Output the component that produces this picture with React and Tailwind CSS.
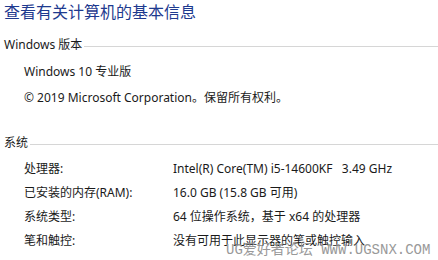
import React from 'react';

const font = { fontFamily: '"Segoe UI", "Noto Sans", "Noto Sans CJK SC", sans-serif' };

function Section({ title, children }) {
  return (
    <div>
      <div className="flex items-center h-[20px]">
        <span className="text-[12px] text-[#1a1a1a] pr-[2px]">{title}</span>
        <div className="flex-1 h-px bg-[#d6d6d6] mt-[2px]" />
      </div>
      {children}
    </div>
  );
}

function Row({ label, value }) {
  return (
    <div className="flex h-[24px] items-center text-[12px] text-[#1a1a1a]">
      <span className="w-[149px] shrink-0">{label}</span>
      <span className="whitespace-pre">{value}</span>
    </div>
  );
}

export default function App() {
  return (
    <div className="relative w-[438px] h-[260px] overflow-hidden bg-white" style={font}>
      <div className="pl-[4px] pt-[1px]">
        <h1 className="text-[16px] leading-[22px] text-[#1e3a8f]">查看有关计算机的基本信息</h1>
        <div className="mt-[12px]">
          <Section title="Windows 版本">
            <div className="pl-[20px] pt-[8px] text-[12px] text-[#1a1a1a] space-y-[9px]">
              <div className="h-[17px] leading-[17px]">Windows 10 专业版</div>
              <div className="h-[17px] leading-[17px]">© 2019 Microsoft Corporation。保留所有权利。</div>
            </div>
          </Section>
        </div>
        <div className="mt-[27px]">
          <Section title="系统">
            <div className="pl-[20px] pt-[4px]">
              <Row label="处理器:" value="Intel(R) Core(TM) i5-14600KF   3.49 GHz" />
              <Row label="已安装的内存(RAM):" value="16.0 GB (15.8 GB 可用)" />
              <Row label="系统类型:" value="64 位操作系统，基于 x64 的处理器" />
              <Row label="笔和触控:" value="没有可用于此显示器的笔或触控输入" />
            </div>
          </Section>
        </div>
      </div>
      <div
        className="absolute left-[226px] top-[241px] text-[14px] leading-[18px] text-[#999999] whitespace-pre"
        style={{ fontFamily: '"Liberation Mono", "Noto Sans CJK SC", monospace' }}
      >
        UG爱好者论坛 WWW.UGSNX.COM
      </div>
    </div>
  );
}
